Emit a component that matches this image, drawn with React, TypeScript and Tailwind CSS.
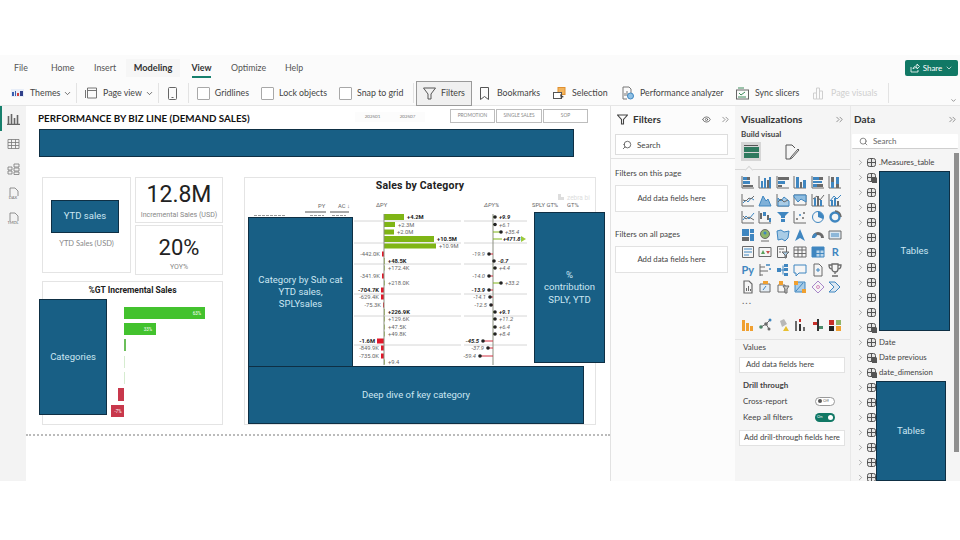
import React from "react";
import { ChevronDown, ChevronRight, ChevronsRight, Search, Eye } from "lucide-react";

const B = "#3f86c0";
const G = "#6a6a6a";
const O = "#f0a030";

function Ic({ children }: { children: React.ReactNode }) {
  return (
    <svg width="14" height="14" viewBox="0 0 14 14" fill="none" strokeWidth="1" stroke={G}>
      {children}
    </svg>
  );
}

const rect = (x: number, y: number, w: number, h: number, c = B) => <rect x={x} y={y} width={w} height={h} fill={c} stroke="none" />;
const axisL = <path d="M1 1v12h12" />;

const vizIcons: React.ReactNode[] = [
  <>{axisL}{rect(2, 2, 4, 3)}{rect(6, 2, 3, 3, G)}{rect(2, 6, 7, 3)}{rect(2, 10, 10, 2, G)}</>,
  <>{axisL}{rect(3, 6, 2, 7)}{rect(6, 3, 2, 10)}{rect(9, 5, 2, 8, G)}{rect(11, 2, 2, 11)}</>,
  <>{axisL}{rect(2, 2, 11, 3, G)}{rect(2, 6, 7, 3)}{rect(2, 10, 4, 2, G)}</>,
  <>{axisL}{rect(3, 2, 3, 11)}{rect(7, 7, 2, 6, G)}{rect(10, 5, 3, 8)}</>,
  <>{axisL}{rect(2, 2, 6, 3)}{rect(8, 2, 4, 3, G)}{rect(2, 6, 9, 2)}{rect(2, 9, 4, 3)}{rect(6, 9, 6, 3, G)}</>,
  <>{axisL}{rect(3, 2, 3, 5, G)}{rect(3, 7, 3, 6)}{rect(8, 2, 3, 7)}{rect(8, 9, 3, 4, G)}</>,
  <>{axisL}<path d="M2 10l3-3 2 2 3-4 3 2" stroke={B} /><path d="M2 7l3 1 3-3 2 1 3-3" stroke={G} /></>,
  <><path d="M1 13L5 3l3 5 2-2 3 7z" fill="#7fb0d8" stroke={B} /></>,
  <>{axisL}<path d="M2 5l3 3 3-4 5 4v5H2z" fill="#a9cce6" stroke={B} /><path d="M2 9l3-3 3 3 4-2" stroke={G} /></>,
  <><path d="M1 2h12v10H1z" stroke={G} /><path d="M1 4l4 5 3-3 5 3V2H1z" fill="#8fbde0" stroke={B} /></>,
  <>{axisL}{rect(3, 5, 2, 8)}{rect(6, 3, 2, 10, G)}{rect(9, 7, 2, 6)}<path d="M2 6l4-3 3 4 4-5" stroke={G} /></>,
  <>{axisL}{rect(3, 7, 2, 6)}{rect(6, 5, 2, 8)}{rect(9, 8, 2, 5, G)}<path d="M2 8l4-5 3 3 4-4" stroke={B} /></>,
  <>{axisL}<path d="M2 10l3-4 3 3 5-6" stroke={B} /><path d="M2 6l3 3 3-2 5 3" stroke={G} /></>,
  <>{axisL}{rect(2, 3, 2, 6, G)}{rect(5, 2, 3, 4)}{rect(9, 5, 2, 5, G)}{rect(11, 8, 2, 4)}</>,
  <><path d="M1 2h12l-4 4v2h-4V6zM5 9h4v3H5z" fill={B} stroke="none" /></>,
  <>{axisL}<circle cx="4" cy="9" r="1" fill={G} stroke="none" /><circle cx="7" cy="5" r="1" fill={B} stroke="none" /><circle cx="10" cy="8" r="1" fill={G} stroke="none" /><circle cx="11" cy="3" r="1" fill={G} stroke="none" /></>,
  <><circle cx="7" cy="7" r="5.5" stroke={B} /><path d="M7 7V1.5A5.5 5.5 0 0 1 12 9z" fill={B} stroke="none" /></>,
  <><circle cx="7" cy="7" r="4.5" stroke={B} strokeWidth="2.4" /><path d="M7 1A6 6 0 0 1 13 7" stroke={G} strokeWidth="1.6" /></>,
  <>{rect(1, 1, 7, 7)}{rect(9, 1, 4, 4)}{rect(9, 6, 4, 7)}{rect(1, 9, 7, 4, G)}</>,
  <><circle cx="7" cy="6" r="4.5" fill="#8fb56a" stroke={G} /><circle cx="7" cy="5" r="1.5" fill={B} stroke="none" /><path d="M3 13h8" /></>,
  <><path d="M1 3l4-1 3 2 5-1-1 7-3 3-3-2-4 1z" fill="#a9cce6" stroke={B} /></>,
  <><path d="M7 1l5 12-5-3-5 3z" fill={B} stroke="none" /></>,
  <><path d="M1 10a6 6 0 0 1 12 0h-3a3 3 0 0 0-6 0z" fill={G} stroke="none" /><path d="M1 10a6 6 0 0 1 4-5l1 3a3 3 0 0 0-2 2z" fill={B} stroke="none" /></>,
  <><path d="M1 3h12v8H1z" fill="#dbe7f1" stroke={G} /><path d="M3 6h8M3 8h8" stroke={B} /></>,
  <><path d="M1.500 1.500h11v11h-11z" /><path d="M3 4h8M3 7h8M3 10h5" stroke={B} /></>,
  <><path d="M1 2.500h12v9H1z" /><path d="M3 9l2-4 2 4z" fill="#5aa05a" stroke="none" /><path d="M8 6l2 3 2-3z" fill="#c8504a" stroke="none" /></>,
  <><path d="M1.500 1.500h9v11h-9z" /><path d="M3 4h5M3 7h2" /><path d="M6 7h7l-3 3v3H9v-3z" fill="#a9cce6" stroke={G} /></>,
  <><path d="M1 2h12v10H1zM1 5h12M1 8.500h12M5 2v10M9 2v10" /></>,
  <><path d="M1 2h12v10H1z" fill="#bcd6ea" stroke={B} /><path d="M1 5h12M1 8.500h12M5 2v10M9 2v10" stroke={B} />{rect(1, 2, 12, 3)}{rect(1, 2, 4, 10)}</>,
  null,
  null,
  <><path d="M2 1v12M2 4h5M2 8h8M2 12h3" /><path d="M8 2h4M11 6h2" stroke={B} strokeWidth="1.600" /></>,
  <>{rect(1, 5, 4, 4)}{rect(8, 1, 4, 3)}{rect(8, 5, 4, 3)}{rect(8, 10, 4, 3)}<path d="M5 7h3M7 2.500v9" stroke={B} /></>,
  <><path d="M1 2h12v8H6l-3 3v-3H1z" stroke={B} /></>,
  <><path d="M3 1h5l3 3v9H3z" /><path d="M7 5v4M5 7h4" stroke={B} /></>,
  <><path d="M4 1h6v5a3 3 0 0 1-6 0zM7 9v2M4 13h6M4 2H1c0 3 1 4 3 4M10 2h3c0 3-1 4-3 4" stroke={G} strokeWidth="1.300" /></>,
  <><path d="M3 1h5l3 3v9H3z" strokeWidth="1.200" />{rect(5, 8, 1, 3, G)}{rect(7, 6, 1, 5, G)}{rect(9, 9, 1, 2, G)}</>,
  <><path d="M2 4h10v8H2z" fill="#e4ecf3" stroke={G} />{rect(5, 1, 5, 3, O)}<path d="M5 10l3-4" stroke={B} /></>,
  <><path d="M2 5h7v7H2z" stroke={G} />{rect(3, 1, 4, 4, O)}<path d="M7 6h6l-2 3v4H9V9z" fill="#cfcfcf" stroke={G} /></>,
  <><path d="M2 2h10v10H2z" fill="#a9cce6" stroke={B} /><path d="M3 11l7-8" stroke={B} />{rect(1, 1, 4, 4, O)}{rect(9, 9, 4, 4, O)}</>,
  <><path d="M7 1l6 6-6 6-6-6z" stroke="#a887c9" /><circle cx="7" cy="7" r="1.500" stroke="#d58ac0" /></>,
  <><path d="M1 2h6l5 5-5 5H1l5-5z" fill="#dbe7f1" stroke={B} /></>,
];

const extras: React.ReactNode[] = [
  <>{rect(1, 2, 3, 11, O)}{rect(5, 5, 3, 8, O)}{rect(9, 8, 3, 5, O)}</>,
  <><circle cx="3" cy="9" r="1.800" fill="#4b8a6a" stroke="none" /><circle cx="8" cy="6" r="1.800" fill={G} stroke="none" /><circle cx="12" cy="2" r="1.500" fill={B} stroke="none" /><circle cx="11" cy="11" r="1.500" fill={G} stroke="none" /><path d="M3 9l5-3 4-4M8 6l3 5" /></>,
  <><path d="M4 3l4-2 3 5-5 3z" fill="#b8b8b8" stroke="none" /><path d="M7 13l3-5 3 5z" fill="#e8c030" stroke="none" /></>,
  <>{rect(2, 3, 2, 10, G)}{rect(6, 1, 2, 3, "#c8302a")}{rect(6, 6, 2, 7, "#333")}{rect(10, 9, 2, 4, G)}</>,
  <>{rect(6, 1, 2, 12, "#333")}{rect(2, 4, 4, 3, "#c8302a")}{rect(8, 8, 4, 3, "#4b8a6a")}</>,
  <>{rect(1, 2, 5, 5, "#c8302a")}{rect(8, 2, 5, 5, "#8fb56a")}{rect(1, 8, 5, 5, "#222")}{rect(8, 8, 5, 5, "#f0a030")}</>,
];

function TableIcon({ doc }: { doc?: boolean }) {
  return (
    <svg width="10" height="10" viewBox="0 0 10 10" fill="none" className="shrink-0">
      <rect x="0.500" y="0.500" width="8" height="8" rx="2" stroke="#555" fill="#e6e6e6" />
      <path d="M0.500 4.500h8M4.500 0.500v8" stroke="#555" />
      {doc && <rect x="5" y="4.500" width="5" height="5.500" fill="#555" />}
    </svg>
  );
}

function RailIcon({ children, label }: { children: React.ReactNode; label?: string }) {
  return (
    <div className="h-[25px] flex flex-col items-center justify-center">
      <svg width="13" height="12" viewBox="0 0 13 12" fill="none" stroke="#777">
        {children}
      </svg>
      {label && <span className="text-[4px] leading-[4px] text-[#666] -mt-[3px] bg-[#f3f3f3] px-[0.500px]">{label}</span>}
    </div>
  );
}

function Sep({ ml }: { ml: string }) {
  return <div className={`${ml} w-px h-[20px] bg-[#e3e3e3]`} />;
}

function Check({ label, ml }: { label: string; ml: string }) {
  return (
    <div className={`${ml} flex items-center gap-[5px]`}>
      <div className="w-[13px] h-[13px] border border-[#a8a8a8] rounded-[1px] bg-white" />
      <span>{label}</span>
    </div>
  );
}

function Overlay({ className, children }: { className: string; children: React.ReactNode }) {
  return (
    <div className={`bg-[#185f85] border border-[#0e2f44] text-[#cbe6f2] font-['Roboto',sans-serif] font-normal text-[9.500px] flex items-center justify-center text-center ${className}`}>
      {children}
    </div>
  );
}

function FieldBox({ text, className }: { text: string; className: string }) {
  return <div className={`border border-[#e2e2e2] bg-white flex items-center justify-center whitespace-nowrap text-[7.800px] text-[#444] ${className}`}>{text}</div>;
}

const t = (x: number, y: number, s: string, bold?: boolean, end?: boolean, italic?: boolean) => (
  <text x={x} y={y + 2} fontSize="5.800" fill={bold ? "#222" : "#666"} fontWeight={bold ? 700 : 400} fontStyle={italic ? "italic" : "normal"} textAnchor={end ? "end" : "start"}>
    {s}
  </text>
);

const pyRows: [number, number, string, boolean][] = [
  [217, 20, "+4.2M", true],
  [224.5, 11, "+2.3M", false],
  [232, 10, "+2.0M", false],
  [239, 50, "+10.5M", true],
  [246, 52, "+10.9M", false],
  [254, -2, "-442.0K", false],
  [261, 1, "+48.5K", true],
  [268, 1, "+172.4K", false],
  [276, -2, "-341.9K", false],
  [283, 1, "+218.0K", false],
  [290, -3, "-704.7K", true],
  [297, -3, "-629.4K", false],
  [305, -1, "-75.3K", false],
  [312, 1, "+226.9K", true],
  [319, 1, "+129.6K", false],
  [327, 1, "+47.5K", false],
  [334, 1, "+49.8K", false],
  [341, -7, "-1.6M", true],
  [348, -3, "-849.9K", false],
  [356, -3, "-735.0K", false],
  [362, 1, "+9.4", false],
];

const pctRows: [number, number, string, boolean][] = [
  [217, 495, "+9.9", true],
  [224.5, 495, "+6.1", false],
  [232, 501, "+35.4", false],
  [239, 520, "+471.8", true],
  [254, 489, "-19.9", false],
  [261, 494, "-0.7", true],
  [268, 495, "+4.4", false],
  [276, 489, "-14.0", false],
  [283, 501, "+33.2", false],
  [290, 489, "-13.9", true],
  [297, 490, "-14.1", false],
  [305, 491, "-12.5", false],
  [312, 495, "+9.1", true],
  [319, 495, "+11.2", false],
  [327, 495, "+6.4", false],
  [334, 495, "+8.4", false],
  [341, 483, "-45.5", true],
  [348, 488, "-37.9", false],
  [356, 480, "-59.4", false],
];

function ZebraChart() {
  return (
    <svg className="absolute inset-0" width="352" height="248" viewBox="245 178 352 248" fontFamily="'Roboto',sans-serif">
      {t(318, 206, "PY", false)}
      {t(338, 206, "AC ↓", false)}
      <path d="M305 212h21M330 212h19" stroke="#555" strokeWidth="1" />
      <path d="M254 215.500h31M310 215.500h14M332 215.500h14" stroke="#999" strokeWidth="1" strokeDasharray="3 1" />
      {t(376, 205, "ΔPY", false)}
      {t(484, 205, "ΔPY%", false, false, true)}
      {t(532, 205, "SPLY GT%", false)}
      {t(567, 205, "GT%", false)}
      <path d="M558 194h3v3h3v3h-6z" fill="#ddd" />
      <text x="567" y="200" fontSize="6.500" fill="#ddd">zebra bi</text>
      {[221, 243, 264, 294, 316, 345].map((y) => (
        <g key={y}>
          <path d={`M354 ${y}h107M464 ${y}h63`} stroke="#ccc" strokeWidth="0.800" />
        </g>
      ))}
      {pyRows.map(([y, w, s, b]) =>
        w > 0 ? (
          <g key={s}>
            <rect x="384" y={y - (b ? 3 : 2.500)} width={w} height={b ? 6 : 5} fill={w > 1 ? "#7fb516" : "#a9c96a"} />
            {t(384 + w + 3, y, s, b)}
          </g>
        ) : (
          <g key={s}>
            <rect x={384 + w} y={y - 2.500} width={-w} height="5" fill="#e0182a" />
            {t(384 + w - 2, y, s, b, true)}
          </g>
        ),
      )}
      <path d="M384 214v151M493 214v151" stroke="#8b8f80" strokeWidth="1" />
      {pctRows.map(([y, x, s, b]) => {
        const pos = x >= 493;
        return (
          <g key={s}>
            <path d={`M493 ${y}H${x}`} stroke={pos ? "#7fb516" : "#d03040"} strokeWidth="1" />
            {s === "+471.8" ? (
              <>
                <path d="M521 236l5 3-5 3z" fill="#9cc93a" />
                <rect x="502" y="236" width="19" height="6" fill="#fff" />
                {t(503, y, s, b, false, true)}
              </>
            ) : (
              <>
                <circle cx={x} cy={y} r="1.800" fill="#222" />
                {pos ? t(x + 4, y, s, b, false, true) : t(x - 4, y, s, b, true, true)}
              </>
            )}
          </g>
        );
      })}
    </svg>
  );
}

function GtBars() {
  return (
    <svg className="absolute inset-0" width="181" height="144" viewBox="43 282 181 144" fontFamily="'Roboto',sans-serif">
      <rect x="124" y="307" width="81" height="12" fill="#43c22e" />
      <text x="201" y="315" fontSize="4.500" fill="#fff" textAnchor="end">63%</text>
      <rect x="124" y="323" width="32" height="12" fill="#43c22e" />
      <text x="152" y="331" fontSize="4.500" fill="#fff" textAnchor="end">33%</text>
      <rect x="124" y="339" width="2" height="12" fill="#6bbf5a" />
      <rect x="124" y="356" width="1" height="12" fill="#d6ecd0" />
      <rect x="124" y="372" width="1" height="12" fill="#d6ecd0" />
      <rect x="118" y="388" width="6" height="13" fill="#c8384c" />
      <rect x="111" y="405" width="13" height="12" fill="#c8384c" />
      <text x="118" y="413" fontSize="4.500" fill="#fff" textAnchor="middle">-7%</text>
    </svg>
  );
}

export default function App() {
  const rows = Array.from({ length: 22 }, (_, i) => i);
  return (
    <div className="w-[960px] h-[540px] bg-white overflow-hidden pt-[55px] font-['Lato',sans-serif] text-[8.800px] text-[#444]">
      <div className="h-[426px] flex flex-col bg-[#fbfbfb]">
        {/* Tabs */}
        <div className="h-[25px] flex items-center relative shrink-0 text-[#555]">
          <span className="ml-[14px] w-[13px]">File</span>
          <span className="ml-[24px] w-[23px]">Home</span>
          <span className="ml-[20px] w-[22px]">Insert</span>
          <span className="ml-[10px] w-[54px] h-[18px] flex items-center justify-center bg-[#f6f6f6] font-bold text-[9.200px] text-[#333]">Modeling</span>
          <span className="ml-[12px] w-[19px] h-[18px] flex items-center justify-center font-bold text-[#333] border-b-2 border-[#17806d] box-border mt-[2px]">View</span>
          <span className="ml-[20px] w-[35px]">Optimize</span>
          <span className="ml-[19px] w-[18px]">Help</span>
          <div className="ml-auto mr-[2px] w-[53px] h-[16px] rounded-[2px] bg-[#117865] text-white text-[8px] flex items-center justify-center gap-[3px]">
            <svg width="10" height="10" viewBox="0 0 10 10" fill="none" stroke="#fff" strokeWidth="0.800">
              <path d="M1 4v5h7V7M3 6c0-2 2-3 4-3V1l2.500 2.500L7 6V4.500C5 4.500 4 5 3 6z" />
            </svg>
            <span>Share</span>
            <ChevronDown size={8} />
          </div>
        </div>
        {/* Ribbon */}
        <div className="h-[26px] flex items-center shrink-0 border-b border-[#e6e6e6] relative pt-[1px] whitespace-nowrap">
          <svg className="ml-[11px]" width="13" height="8" viewBox="0 0 13 8">
            <rect width="13" height="8" fill="#e8eef8" />
            <path d="M1 7V3h2v4zM4 7V2h1v5z" fill="#3a5fb0" />
            <path d="M6 7V4h2v3z" fill="#d04040" />
            <path d="M9 7V2h3v5z" fill="#30408a" />
          </svg>
          <span className="ml-[6px] w-[30px]">Themes</span>
          <ChevronDown size={9} className="ml-[3px]" />
          <Sep ml="ml-[4px]" />
          <svg className="ml-[8px]" width="12" height="12" viewBox="0 0 12 12" fill="none" stroke="#666" strokeWidth="0.900">
            <path d="M2.500 1h9v10h-9zM2.500 3.500h9M0.500 3v8" />
          </svg>
          <span className="ml-[6px] w-[39px]">Page view</span>
          <ChevronDown size={9} className="ml-[3px]" />
          <Sep ml="ml-[4px]" />
          <svg className="ml-[9px]" width="9" height="13" viewBox="0 0 9 13" fill="none" stroke="#666">
            <rect x="0.500" y="0.500" width="8" height="12" rx="1" />
            <path d="M3.500 10.500h2" />
          </svg>
          <Sep ml="ml-[11px]" />
          <div className="ml-[8px] w-[52px]"><Check label="Gridlines" ml="ml-0" /></div>
          <div className="ml-[12px] w-[66px]"><Check label="Lock objects" ml="ml-0" /></div>
          <div className="ml-[12px] w-[66px]"><Check label="Snap to grid" ml="ml-0" /></div>
          <Sep ml="ml-[8px]" />
          <div className="ml-[2px] w-[56px] h-[25px] bg-[#f0f0f0] border border-[#9a9a9a] flex items-center gap-[5px] pl-[6px]">
            <svg width="13" height="13" viewBox="0 0 13 13" fill="none" stroke="#555">
              <path d="M0.500 1h12L8 7v5H5V7z" />
            </svg>
            <span>Filters</span>
          </div>
          <svg className="ml-[8px]" width="9" height="13" viewBox="0 0 9 13" fill="none" stroke="#555">
            <path d="M0.500 0.500h8v12L4.500 9.500l-4 3z" />
          </svg>
          <span className="ml-[8px] w-[42px]">Bookmarks</span>
          <svg className="ml-[14px]" width="13" height="13" viewBox="0 0 13 13" fill="none">
            <rect x="5" y="0.500" width="7" height="7" fill="#f2b45c" stroke="#e09030" />
            <rect x="0.500" y="5.500" width="8" height="6" fill="#fff" stroke="#555" />
            <path d="M7 7l4 3-2 .5L8 12z" fill="#444" />
          </svg>
          <span className="ml-[6px] w-[35px]">Selection</span>
          <svg className="ml-[15px]" width="12" height="14" viewBox="0 0 12 14" fill="none" stroke="#777">
            <path d="M1 1h6l2 2v4M1 1v12h4" />
            <path d="M3 10V7M5 10V5" />
            <circle cx="8.500" cy="10" r="3" fill="#8fc0e4" stroke="#3f86c0" />
          </svg>
          <span className="ml-[6px] w-[83px]">Performance analyzer</span>
          <svg className="ml-[13px]" width="13" height="13" viewBox="0 0 13 13" fill="none" stroke="#666">
            <rect x="0.500" y="3" width="12" height="9" />
            <path d="M2 1h6M3 6l2 2 4-3M2 10h8" stroke="#3d8a5a" />
          </svg>
          <span className="ml-[6px] w-[44px]">Sync slicers</span>
          <svg className="ml-[14px]" width="11" height="13" viewBox="0 0 11 13" fill="none" stroke="#cfcfcf">
            <path d="M0.500 6h3v6h-3zM3.500 1h3v11h-3zM6.500 4h3v8h-3z" />
          </svg>
          <span className="ml-[7px] w-[47px] text-[#cfcfcf]">Page visuals</span>
          <Sep ml="ml-[10px]" />
          <ChevronDown size={7} className="absolute right-[3px] bottom-[1px] text-[#555]" />
        </div>
        {/* Body */}
        <div className="flex-1 min-h-0 flex">
          {/* Rail */}
          <div className="w-[26px] shrink-0 bg-[#f3f3f3] relative">
            <div className="absolute left-0 top-0 w-[1.500px] h-[25px] bg-[#17806d]" />
            <RailIcon>
              <path d="M1.500 11V3M4.500 11V1M7.500 11V5M10.500 11V2M0 11.500h13" stroke="#666" strokeWidth="1.600" />
            </RailIcon>
            <RailIcon>
              <path d="M1 1.500h11v9H1zM1 4.500h11M1 7.500h11M4.500 1.500v9M8.500 1.500v9" strokeWidth="0.800" />
            </RailIcon>
            <RailIcon>
              <path d="M1 4h4v3H1zM1 8h4v3H1zM7 1h5v3H7zM7 5h5v3H7zM7 9h5v2.500H7z" strokeWidth="0.800" />
            </RailIcon>
            <RailIcon label="DAX">
              <path d="M3 9V1h5l3 3v5" strokeWidth="0.800" />
            </RailIcon>
            <RailIcon label="TMDL">
              <path d="M3 9V1h5l3 3v5" strokeWidth="0.800" />
            </RailIcon>
          </div>
          {/* Canvas */}
          <div className="w-[584px] shrink-0 bg-white flex flex-col">
            <div className="h-[23px] flex items-start relative">
              <div className="ml-[12px] mt-[6px] text-[9.800px] leading-[13px] font-bold text-[#111] w-[317px] whitespace-nowrap">PERFORMANCE BY BIZ LINE (DEMAND SALES)</div>
              <div className="mt-[6px] w-[35px] h-[10px] text-[4.500px] flex items-center justify-center text-[#777] bg-[#fcfcfc]">202501</div>
              <div className="mt-[6px] w-[35px] h-[10px] text-[4.500px] flex items-center justify-center text-[#777] bg-[#fcfcfc]">202507</div>
              <div className="ml-[25px] mt-[3px] flex gap-[1px]">
                <div className="w-[45px] h-[14px] border border-[#bdbdbd] text-[4.800px] flex items-center justify-center text-[#888]">PROMOTION</div>
                <div className="w-[46px] h-[14px] border border-[#bdbdbd] text-[4.800px] flex items-center justify-center text-[#888]">SINGLE SALES</div>
                <div className="w-[45px] h-[14px] border border-[#bdbdbd] text-[4.800px] flex items-center justify-center text-[#888]">SOP</div>
              </div>
            </div>
            <div className="ml-[13px] w-[535px] h-[28px] bg-[#185f85] border border-[#0e2f44]" />
            <div className="flex mt-[20px]">
              <div className="ml-[16px] w-[181px] shrink-0 flex flex-col">
                <div className="flex justify-between h-[98px]">
                  <div className="w-[89px] h-[96px] border border-[#e4e4e4] flex flex-col items-center pt-[22px]">
                    <Overlay className="w-[68px] h-[33px] shrink-0 self-start ml-[8px]">YTD sales</Overlay>
                    <span className="mt-[5px] text-[7.500px] text-[#888]">YTD Sales (USD)</span>
                  </div>
                  <div className="w-[88px] flex flex-col gap-[2px]">
                    <div className="h-[46px] border border-[#e4e4e4] flex flex-col items-center font-['Roboto',sans-serif]">
                      <span className="text-[23px] leading-[30px] mt-[2px] text-[#222]">12.8M</span>
                      <span className="text-[7.100px] leading-[9px] text-[#888] whitespace-nowrap">Incremental Sales (USD)</span>
                    </div>
                    <div className="h-[50px] border border-[#e4e4e4] flex flex-col items-center font-['Roboto',sans-serif]">
                      <span className="text-[22px] leading-[30px] mt-[7px] text-[#222]">20%</span>
                      <span className="text-[7px] leading-[9px] text-[#888]">YOY%</span>
                    </div>
                  </div>
                </div>
                <div className="mt-[6px] h-[144px] border border-[#e4e4e4] relative">
                  <div className="text-center text-[8.500px] leading-[12px] mt-[2px] font-bold text-[#222] font-['Roboto',sans-serif]">%GT Incremental Sales</div>
                  <GtBars />
                  <Overlay className="absolute left-[-4px] top-[17px] w-[68px] h-[116px]">Categories</Overlay>
                </div>
              </div>
              <div className="ml-[21px] w-[352px] h-[248px] border border-[#e4e4e4] relative">
                <div className="text-center text-[10.500px] leading-[14px] mt-[1px] font-bold text-[#222] font-['Roboto',sans-serif] tracking-[0.2px]">Sales by Category</div>
                <ZebraChart />
                <Overlay className="absolute left-[3px] top-[39px] w-[105px] h-[150px] leading-[12px]">
                  <span>Category by Sub cat<br />YTD sales,<br />SPLYsales</span>
                </Overlay>
                <Overlay className="absolute left-[289px] top-[34px] w-[71px] h-[151px] leading-[12.500px]">
                  <span>%<br />contribution<br />SPLY, YTD</span>
                </Overlay>
                <Overlay className="absolute left-[3px] top-[188px] w-[336px] h-[58px]">Deep dive of key category</Overlay>
              </div>
            </div>
            <div className="mt-[9px] border-t-2 border-dotted border-[#bbb]" />
          </div>
          {/* Filters */}
          <div className="w-[125px] shrink-0 bg-[#fcfcfc] border-l border-[#e2e2e2] flex flex-col">
            <div className="h-[26px] flex items-center pl-[6px] pr-[4px] pt-[1px]">
              <svg width="11" height="11" viewBox="0 0 11 11" fill="none" stroke="#444" strokeWidth="1.100">
                <path d="M0.500 1h10L6.500 5.500V10h-2V5.500z" />
              </svg>
              <span className="ml-[5px] text-[10px] font-bold text-[#333]">Filters</span>
              <Eye size={9} className="ml-auto text-[#555]" />
              <ChevronsRight size={11} strokeWidth={1.200} className="ml-[9px] text-[#444]" />
            </div>
            <div className="ml-[4px] w-[113px] h-[21px] mt-[2px] bg-white border border-[#ddd] flex items-center pl-[6px] gap-[5px] text-[8px]">
              <Search size={10} className="-scale-x-100 text-[#555]" />
              <span>Search</span>
            </div>
            <div className="mt-[3px] border-t border-[#e2e2e2]" />
            <div className="ml-[4px] mt-[9px] text-[8px] leading-[10px]">Filters on this page</div>
            <FieldBox text="Add data fields here" className="ml-[4px] mt-[7px] w-[113px] h-[27px]" />
            <div className="ml-[4px] mt-[17px] text-[8px] leading-[10px]">Filters on all pages</div>
            <FieldBox text="Add data fields here" className="ml-[4px] mt-[7px] w-[113px] h-[27px]" />
          </div>
          {/* Visualizations */}
          <div className="w-[115px] shrink-0 bg-[#f5f5f5] flex flex-col relative">
            <div className="h-[26px] flex items-center justify-between pl-[6px] pr-[5px] pt-[1px]">
              <span className="text-[10px] font-bold text-[#333]">Visualizations</span>
              <ChevronsRight size={11} strokeWidth={1.200} className="text-[#444]" />
            </div>
            <div className="ml-[6px] text-[8px] leading-[10px] font-bold text-[#444] -mt-[3px]">Build visual</div>
            <div className="flex items-center ml-[6px] mt-[3px]">
              <div className="w-[20px] h-[19px] bg-[#d6d6d6] flex flex-col items-center justify-center gap-[1px]">
                <div className="w-[14px] h-px bg-[#555]" />
                <div className="w-[15px] h-[5px] bg-[#2f7a5f]" />
                <div className="w-[15px] h-[5px] bg-[#2f7a5f]" />
              </div>
              <svg className="ml-[23px]" width="16" height="16" viewBox="0 0 16 16" fill="none" stroke="#555">
                <path d="M2 1h6l3 3M2 1v14h4M15 6l-7 8-2 1 1-2 7-8z" />
              </svg>
            </div>
            <div className="mt-[8px] border-t border-[#d8d8d8] relative">
              <div className="absolute left-[11px] -top-[3.500px] w-[6px] h-[6px] rotate-45 bg-[#f5f5f5] border-l border-t border-[#d8d8d8]" />
            </div>
            <div className="ml-[4px] mt-[5px] w-[105px] grid grid-cols-6 gap-y-[3.500px] justify-items-center">
              {vizIcons.map((ic, i) =>
                i === 29 ? (
                  <span key={i} className="h-[14px] text-[11px] leading-[14px] font-bold text-[#3f86c0]">R</span>
                ) : i === 30 ? (
                  <span key={i} className="h-[14px] text-[11px] leading-[14px] font-bold text-[#3f86c0]">Py</span>
                ) : (
                  <Ic key={i}>{ic}</Ic>
                ),
              )}
            </div>
            <div className="ml-[7px] mt-[1px] h-[14px] text-[10px] leading-[10px] tracking-[1px] text-[#666]">...</div>
            <div className="ml-[4px] mt-[9px] w-[105px] grid grid-cols-6 justify-items-center">
              {extras.map((ic, i) => (
                <Ic key={i}>{ic}</Ic>
              ))}
            </div>
            <div className="mt-[7px] border-t border-[#e4e4e4]" />
            <div className="ml-[8px] mt-[2px] text-[8px] leading-[10px]">Values</div>
            <FieldBox text="Add data fields here" className="ml-[4px] mt-[5px] w-[106px] h-[16px] !justify-start pl-[6px]" />
            <div className="ml-[8px] mt-[7px] text-[8px] leading-[10px] font-bold">Drill through</div>
            <div className="flex items-center justify-between ml-[8px] mr-[15px] mt-[6px] text-[8px] h-[10px]">
              <span>Cross-report</span>
              <div className="w-[20px] h-[9px] rounded-full border border-[#999] bg-white flex items-center pl-[2px] gap-[1px] text-[4px] text-[#666]">
                <div className="w-[4px] h-[4px] rounded-full bg-[#555]" />
                <span>Off</span>
              </div>
            </div>
            <div className="flex items-center justify-between ml-[8px] mr-[15px] mt-[6px] text-[8px] h-[10px]">
              <span>Keep all filters</span>
              <div className="w-[20px] h-[9px] rounded-full bg-[#117865] flex items-center justify-between px-[2px] text-[4px] text-white">
                <span>On</span>
                <div className="w-[5px] h-[5px] rounded-full bg-white" />
              </div>
            </div>
            <FieldBox text="Add drill-through fields here" className="ml-[4px] mt-[8px] w-[106px] h-[16px]" />
          </div>
          {/* Data */}
          <div className="w-[110px] shrink-0 bg-[#f5f5f5] border-l border-[#e8e8e8] flex flex-col relative overflow-hidden">
            <div className="h-[26px] shrink-0 flex items-center justify-between pl-[3px] pr-[2px] pt-[1px]">
              <span className="text-[10px] font-bold text-[#333]">Data</span>
              <ChevronsRight size={11} strokeWidth={1.200} className="text-[#444]" />
            </div>
            <div className="ml-[1px] mt-[2px] shrink-0 w-[106px] h-[15px] bg-white border-b border-[#cfcfcf] flex items-center pl-[7px] gap-[5px] text-[8px] text-[#666] rounded-[1px]">
              <Search size={9} />
              <span>Search</span>
            </div>
            <div className="absolute right-[1px] top-[47px] w-[5px] h-[299px] bg-[#8f8f8f]" />
            <div className="mt-[6px] shrink-0 flex flex-col">
              {rows.map((i) => (
                <div key={i} className="h-[15px] flex items-center pl-[5px] gap-[2px] text-[7.800px] shrink-0">
                  <ChevronRight size={9} strokeWidth={1.200} className="text-[#555] shrink-0" />
                  <TableIcon doc={i === 1 || i === 11 || i === 13 || i === 14} />
                  <span>{i === 0 ? ".Measures_table" : i === 12 ? "Date" : i === 13 ? "Date previous" : i === 14 ? "date_dimension" : ""}</span>
                </div>
              ))}
            </div>
            <Overlay className="absolute left-[28px] top-[65px] w-[71px] h-[160px]">Tables</Overlay>
            <Overlay className="absolute left-[25px] top-[275px] w-[70px] h-[100px]">Tables</Overlay>
          </div>
        </div>
      </div>
    </div>
  );
}
